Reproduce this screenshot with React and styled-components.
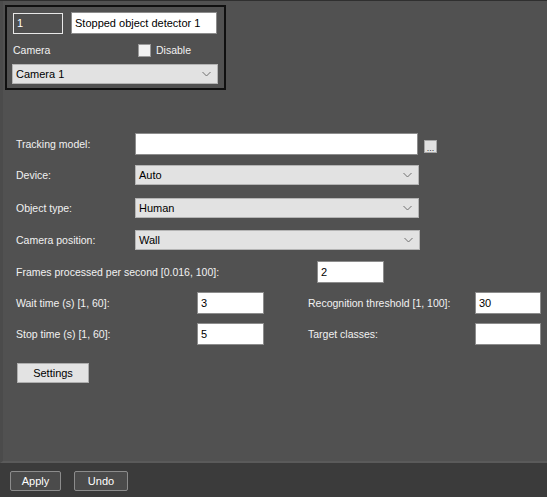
import React, { useState } from "react";
import styled, { createGlobalStyle } from "styled-components";

const GlobalStyle = createGlobalStyle`
  * { box-sizing: border-box; }
  html, body { margin: 0; padding: 0; background: #515151; }
  body {
    font-family: "Liberation Sans", Arial, sans-serif;
    font-size: 10.5px;
    color: #f2f2f2;
  }
`;

const Page = styled.div`
  width: 547px;
  height: 497px;
  display: flex;
  flex-direction: column;
  background: #515151;
  border-top: 1px solid #2f2f2f;
`;

const Main = styled.div`
  flex: 1;
  display: flex;
  flex-direction: column;
  border-left: 3px solid #4b4b4b;
  border-bottom: 2px solid #5a5a5a;
  padding: 4px 0 0 2px;
`;

const GroupBox = styled.div`
  width: 221px;
  height: 85px;
  border: 2px solid #101010;
  padding: 5px 6px 0 6px;
  display: flex;
  flex-direction: column;
`;

const Line = styled.div`
  display: flex;
  align-items: center;
  gap: ${(p) => p.gap || 0}px;
  margin-top: ${(p) => p.top || 0}px;
  height: ${(p) => p.h || 22}px;
`;

const TextBox = styled.div`
  width: ${(p) => p.w}px;
  height: ${(p) => p.h || 22}px;
  background: ${(p) => (p.dark ? "#4f4f4f" : "#ffffff")};
  border: 1px solid ${(p) => (p.dark ? "#e8e8e8" : "#8c8c8c")};
  color: ${(p) => (p.dark ? "#ffffff" : "#000000")};
  padding-left: 3px;
  display: flex;
  align-items: center;
  font-size: 11px;
  white-space: nowrap;
  overflow: hidden;
  flex-shrink: 0;
`;

const Label = styled.span`
  width: ${(p) => (p.w ? `${p.w}px` : "auto")};
  margin-left: ${(p) => p.ml || 0}px;
  flex-shrink: 0;
  color: #f2f2f2;
  white-space: nowrap;
`;

const CheckBox = styled.span`
  width: 13px;
  height: 13px;
  background: #f1f1f1;
  border: 1px solid #9a9a9a;
  flex-shrink: 0;
`;

const ComboBox = styled.div`
  width: ${(p) => p.w}px;
  height: ${(p) => p.h || 20}px;
  margin-left: ${(p) => p.ml || 0}px;
  background: #e2e2e2;
  border: 1px solid #b4b4b4;
  color: #000;
  font-size: 11px;
  display: flex;
  align-items: center;
  justify-content: space-between;
  padding: 0 6px 0 3px;
  flex-shrink: 0;
`;

const Chevron = () => (
  <svg width="9" height="6" viewBox="0 0 9 6">
    <path d="M0.5 1 L4.5 5 L8.5 1" fill="none" stroke="#707070" strokeWidth="1" />
  </svg>
);

const Form = styled.div`
  display: flex;
  flex-direction: column;
  padding-left: 11px;
  margin-top: 43px;
`;

const BrowseButton = styled.button`
  width: 13px;
  height: 13px;
  margin-left: 6px;
  margin-top: 4px;
  padding: 0;
  background: #e2e2e2;
  border: 1px solid #a8a8a8;
  font-size: 9px;
  line-height: 15px;
  color: #333;
  font-family: inherit;
  align-self: center;
`;

const LightButton = styled.button`
  width: 72px;
  height: 20px;
  margin-top: 18px;
  margin-left: 1px;
  background: #e3e3e3;
  border: 1px solid #aeaeae;
  color: #000;
  font-family: inherit;
  font-size: 11px;
  padding: 0;
`;

const Footer = styled.div`
  height: 34px;
  background: #3b3b3b;
  display: flex;
  align-items: flex-start;
  gap: 13px;
  padding: 8px 0 0 10px;
`;

const DarkButton = styled.button`
  width: ${(p) => p.w}px;
  height: 20px;
  background: #4b4b4b;
  border: 1px solid #8c8c8c;
  border-radius: 2px;
  color: #ffffff;
  font-family: inherit;
  font-size: 11px;
  padding: 0;
`;

function Select({ value, w, ml }) {
  return (
    <ComboBox w={w} ml={ml}>
      <span>{value}</span>
      <Chevron />
    </ComboBox>
  );
}

export default function App() {
  const [name] = useState("Stopped object detector 1");

  return (
    <>
      <GlobalStyle />
      <Page>
        <Main>
          <GroupBox>
            <Line gap={8}>
              <TextBox dark w={50} h={21}>1</TextBox>
              <TextBox w={146}>{name}</TextBox>
            </Line>
            <Line top={8} h={16}>
              <Label w={125}>Camera</Label>
              <CheckBox />
              <Label ml={5}>Disable</Label>
            </Line>
            <Line top={6} h={20}>
              <Select value="Camera 1" w={206} ml={-1} />
            </Line>
          </GroupBox>

          <Form>
            <Line h={22}>
              <Label w={119}>Tracking model:</Label>
              <TextBox w={283} />
              <BrowseButton>...</BrowseButton>
            </Line>
            <Line top={10} h={20}>
              <Label w={119}>Device:</Label>
              <Select value="Auto" w={284} />
            </Line>
            <Line top={13} h={20}>
              <Label w={119}>Object type:</Label>
              <Select value="Human" w={284} />
            </Line>
            <Line top={12} h={20}>
              <Label w={119}>Camera position:</Label>
              <Select value="Wall" w={285} />
            </Line>
            <Line top={11} h={22}>
              <Label w={301}>Frames processed per second [0.016, 100]:</Label>
              <TextBox w={67}>2</TextBox>
            </Line>
            <Line top={9} h={22}>
              <Label w={181}>Wait time (s) [1, 60]:</Label>
              <TextBox w={67}>3</TextBox>
              <Label w={167} ml={44}>Recognition threshold [1, 100]:</Label>
              <TextBox w={66}>30</TextBox>
            </Line>
            <Line top={9} h={22}>
              <Label w={181}>Stop time (s) [1, 60]:</Label>
              <TextBox w={67}>5</TextBox>
              <Label w={167} ml={44}>Target classes:</Label>
              <TextBox w={66} />
            </Line>
            <Line h={38} style={{ alignItems: "flex-start" }}>
              <LightButton>Settings</LightButton>
            </Line>
          </Form>
        </Main>
        <Footer>
          <DarkButton w={51}>Apply</DarkButton>
          <DarkButton w={54}>Undo</DarkButton>
        </Footer>
      </Page>
    </>
  );
}
